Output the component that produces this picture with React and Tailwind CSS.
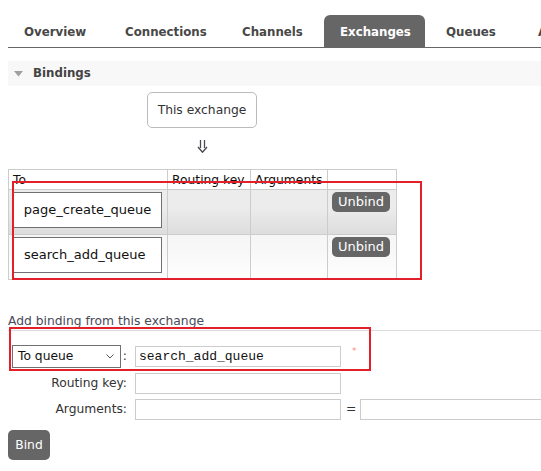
import React from "react";

const tabs = [
  { name: "Overview", w: "w-[96px]" },
  { name: "Connections", w: "w-[112px]" },
  { name: "Channels", w: "w-[93px]" },
  { name: "Exchanges", w: "w-[101px]", active: true },
  { name: "Queues", w: "w-[87px]" },
  { name: "Admin", w: "w-[100px]" },
];

function QueueCell({ name, center }) {
  return (
    <div
      className={`w-[149px] h-[36px] border border-[#707070] bg-white flex items-center text-[13px] text-[#111] ${
        center ? "justify-center" : "pl-[10px]"
      }`}
    >
      {name}
    </div>
  );
}

function UnbindBtn() {
  return (
    <div className="w-[58px] h-[20px] bg-[#666] rounded-[5px] text-white text-[13px] flex items-center justify-center">
      Unbind
    </div>
  );
}

export default function App() {
  return (
    <div className="relative w-[541px] h-[471px] overflow-hidden bg-white font-['DejaVu_Sans',Verdana,sans-serif] text-[12.3px] text-[#333]">
      {/* Tabs */}
      <div className="ml-[8px] mt-[15px] h-[33px] flex border-b border-[#666] whitespace-nowrap">
        {tabs.map((t, i) => (
          <div
            key={t.name}
            className={`${t.w} shrink-0 h-[32px] flex items-center pl-[16px] pt-[3px] font-bold text-[11.8px] ${
              i > 0 ? "ml-[5px]" : ""
            } ${t.active ? "bg-[#666] text-white rounded-t-[6px]" : "text-[#484848]"}`}
          >
            {t.name}
          </div>
        ))}
      </div>

      {/* Bindings header */}
      <div className="ml-[8px] mt-[13px] h-[25px] bg-[#f8f8f8] flex items-center">
        <svg className="ml-[6px]" width="9" height="6" viewBox="0 0 9 6">
          <path d="M0 0 L9 0 L4.5 5.5 Z" fill="#a0a0a0" />
        </svg>
        <span className="ml-[10px] pt-[1px] font-bold text-[11.8px] text-[#444]">Bindings</span>
      </div>

      {/* This exchange */}
      <div className="ml-[147px] mt-[6px] w-[110px] h-[36px] border border-[#bbb] rounded-[5px] flex items-center justify-center text-[12.3px] text-[#333]">
        This exchange
      </div>
      <div className="ml-[147px] w-[110px] h-[41px] flex justify-center pt-[12px]">
        <svg width="11" height="13" viewBox="0 0 11 13">
          <path d="M3.5 0 V8 M7.5 0 V8" stroke="#4a4a55" strokeWidth="1.3" fill="none" />
          <path d="M1 7 L5.5 12.2 L10 7" stroke="#4a4a55" strokeWidth="1.4" fill="none" />
        </svg>
      </div>

      {/* Table */}
      <table className="ml-[8px] border-collapse text-[12.3px]">
        <tbody>
          <tr className="h-[20px]">
            <td className="w-[159px] border border-[#ccc] pl-[4px] pt-[3px] align-top text-[#111] leading-[15px]">To</td>
            <td className="w-[83px] border border-[#ccc] pl-[4px] pt-[3px] align-top text-[#111] leading-[15px]">Routing key</td>
            <td className="w-[77px] border border-[#ccc] pl-[4px] pt-[3px] align-top text-[#111] leading-[15px]">Arguments</td>
            <td className="w-[69px] border border-[#ccc]"></td>
          </tr>
          <tr className="h-[45px] bg-[linear-gradient(to_bottom,#ececec_0%,#ececec_40%,#dcdcdc_100%)]">
            <td className="border border-[#ccc] pl-[4px] pt-[2px] align-top">
              <QueueCell name="page_create_queue" center />
            </td>
            <td className="border border-[#ccc]"></td>
            <td className="border border-[#ccc]"></td>
            <td className="border border-[#ccc] pl-[4px] pt-[2px] align-top">
              <UnbindBtn />
            </td>
          </tr>
          <tr className="h-[45px] bg-[linear-gradient(to_bottom,#f6f6f6_0%,#f8f8f8_40%,#ffffff_100%)]">
            <td className="border border-[#ccc] pl-[4px] pt-[2px] align-top">
              <QueueCell name="search_add_queue" />
            </td>
            <td className="border border-[#ccc]"></td>
            <td className="border border-[#ccc]"></td>
            <td className="border border-[#ccc] pl-[4px] pt-[2px] align-top">
              <UnbindBtn />
            </td>
          </tr>
        </tbody>
      </table>

      {/* Add binding */}
      <div className="ml-[8px] mt-[30px] h-[21px] border-b border-[#ddd] pt-[3px] leading-[16px] text-[12.3px] text-[#4a4a58]">
        Add binding from this exchange
      </div>

      <div className="mt-[14px] flex flex-col gap-[5px]">
        <div className="flex items-start h-[23px]">
          <div className="w-[127px] shrink-0 flex items-center">
            <div className="ml-[12px] w-[110px] h-[23px] border border-[#707070] bg-white flex items-center pl-[5px] pr-[6px] justify-between text-[12.3px] text-[#111]">
              <span>To queue</span>
              <svg width="8" height="5" viewBox="0 0 8 5">
                <path d="M0.5 0.5 L4 4 L7.5 0.5" fill="none" stroke="#555" strokeWidth="1" />
              </svg>
            </div>
            <span className="ml-[2px] text-[#333]">:</span>
          </div>
          <div className="ml-[8px] mt-[1px] shrink-0 w-[206px] h-[21px] border border-[#ccc] flex items-center pl-[3px] font-['Liberation_Mono',monospace] text-[13px] text-[#111]">
            search_add_queue
          </div>
          <span className="ml-[11px] mt-[1px] text-[9px] leading-[10px] text-[#f88]">*</span>
        </div>
        <div className="flex items-center h-[21px]">
          <div className="w-[127px] shrink-0 text-right">Routing key:</div>
          <div className="ml-[8px] shrink-0 w-[206px] h-[21px] border border-[#ccc]"></div>
        </div>
        <div className="flex items-center h-[21px]">
          <div className="w-[127px] shrink-0 text-right">Arguments:</div>
          <div className="ml-[8px] w-[206px] h-[21px] border border-[#ccc] shrink-0"></div>
          <span className="ml-[5px] shrink-0 text-[#333]">=</span>
          <div className="ml-[4px] w-[200px] h-[21px] border border-[#ccc] shrink-0"></div>
        </div>
      </div>

      <div className="ml-[8px] mt-[10px] w-[42px] h-[30px] bg-[#666] rounded-[5px] text-white flex items-center justify-center">
        Bind
      </div>

      {/* Red annotation boxes */}
      <div className="absolute left-[12px] top-[181px] w-[410px] h-[99px] border-2 border-[#e3202a]"></div>
      <div className="absolute left-[9px] top-[327px] w-[362px] h-[44px] border-2 border-[#e3202a]"></div>
    </div>
  );
}
